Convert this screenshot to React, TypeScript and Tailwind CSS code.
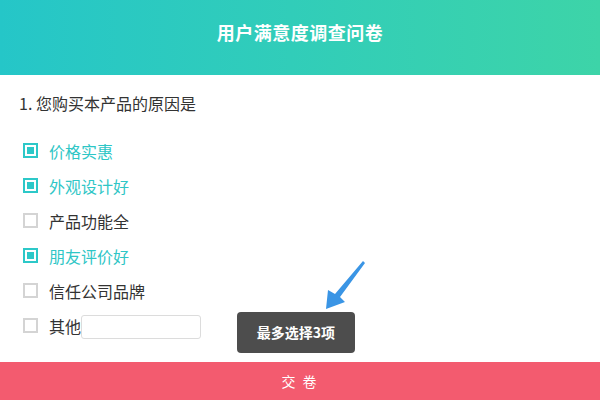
import { useState } from "react";

const options = [
  { id: "price", label: "价格实惠" },
  { id: "look", label: "外观设计好" },
  { id: "func", label: "产品功能全" },
  { id: "friend", label: "朋友评价好" },
  { id: "brand", label: "信任公司品牌" },
];

export default function App() {
  const [checked, setChecked] = useState<Record<string, boolean>>({
    price: true,
    look: true,
    friend: true,
  });
  const [other, setOther] = useState(false);
  const [otherText, setOtherText] = useState("");

  const toggle = (id: string) => setChecked((c) => ({ ...c, [id]: !c[id] }));

  return (
    <div
      className="relative flex h-[400px] w-[600px] flex-col bg-white text-[#333]"
      style={{ fontFamily: '"Noto Sans CJK SC", "Noto Sans", sans-serif' }}
    >
      {/* Header */}
      <div className="flex h-[75px] items-center justify-center bg-gradient-to-r from-[#25c6c8] to-[#3dd4a8] pb-[10px]">
        <h1 className="text-[18px] font-bold tracking-[0.5px] text-white">用户满意度调查问卷</h1>
      </div>

      {/* Question */}
      <div className="px-[19px] pt-[16px]">
        <p className="text-[16px] leading-[24px]">1. 您购买本产品的原因是</p>
      </div>

      <ul className="mt-[18px] pl-[23px]">
        {options.map((o) => (
          <li key={o.id} className="flex h-[35px] items-center">
            <Checkbox checked={!!checked[o.id]} onClick={() => toggle(o.id)} />
            <span
              className={`ml-[11px] text-[16px] leading-[24px] ${
                checked[o.id] ? "text-[#2ec6c6]" : "text-[#333]"
              }`}
            >
              {o.label}
            </span>
          </li>
        ))}
        <li className="flex h-[35px] items-center">
          <Checkbox checked={other} onClick={() => setOther(!other)} />
          <span className={`ml-[11px] text-[16px] leading-[24px] ${other ? "text-[#2ec6c6]" : "text-[#333]"}`}>
            其他
          </span>
          <input
            value={otherText}
            onChange={(e) => setOtherText(e.target.value)}
            className="mt-[3px] h-[24px] w-[120px] rounded-[3px] border border-[#dcdcdc] px-1 text-[14px] outline-none"
          />
        </li>
      </ul>

      {/* Submit bar */}
      <button className="mt-auto flex h-[38px] w-full items-center justify-center bg-[#f35b6f] text-[14px] tracking-[2px] text-white">
        交 卷
      </button>

      {/* Tooltip */}
      <div className="absolute left-[237px] top-[312px] flex h-[41px] w-[118px] items-center justify-center rounded-[4px] bg-[#4d4d4d] text-[14px] font-bold text-white">
        最多选择3项
      </div>
      <svg className="absolute left-[320px] top-[256px]" width="50" height="58" viewBox="0 0 50 58">
        <polygon points="43,5 45,7 20,41 25,46 6,53 8,34 15,38" fill="#3a95e5" />
      </svg>
    </div>
  );
}

function Checkbox({ checked, onClick }: { checked: boolean; onClick: () => void }) {
  return (
    <button
      onClick={onClick}
      className={`flex h-[15px] w-[15px] shrink-0 items-center justify-center border-2 bg-white ${
        checked ? "border-[#2cc8c8]" : "border-[#d4d4d4]"
      }`}
    >
      {checked && <span className="h-[7px] w-[7px] bg-[#2cc8c8]" />}
    </button>
  );
}
